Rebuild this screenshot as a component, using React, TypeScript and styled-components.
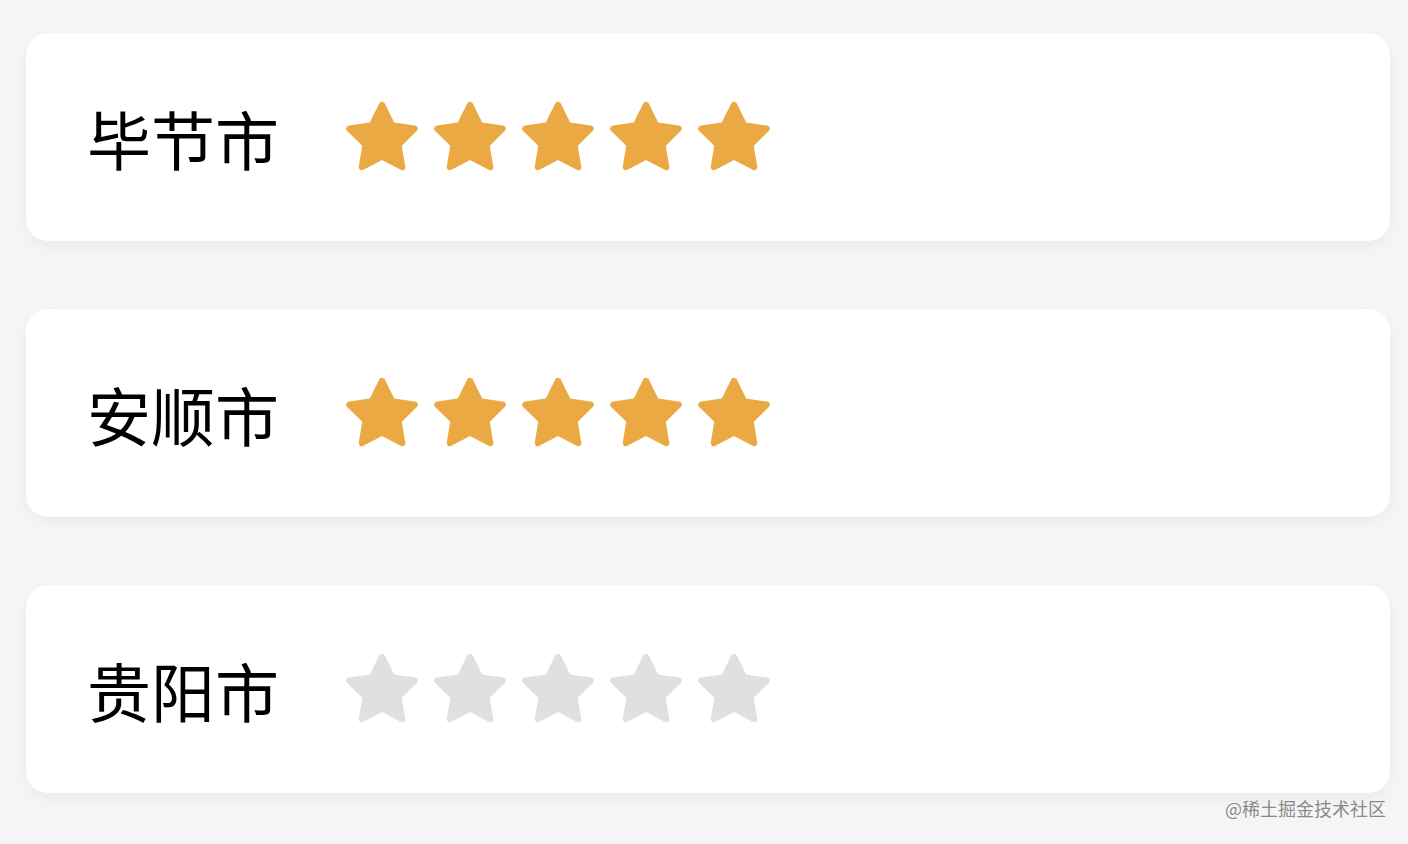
import React, { FunctionComponent } from "react";
import styled, { createGlobalStyle } from "styled-components";

const cities = [
  { name: "毕节市", score: 5 },
  { name: "安顺市", score: 5 },
  { name: "贵阳市", score: 0 },
];

const GlobalStyle = createGlobalStyle`
  html, body {
    margin: 0;
    padding: 0;
    background-color: #f5f5f5;
  }
  body {
    font-family: "Noto Sans CJK SC", "Noto Sans", sans-serif;
  }
`;

interface StarProps {
  on: boolean;
}

const Star: FunctionComponent<StarProps> = ({ on }) => {
  const color = on ? "#eba944" : "#e0e0e0";
  return (
    <StarIcon viewBox="0 0 24 24">
      <path
        d="M12 2.2l3.09 6.26L22 9.47l-5 4.87 1.18 6.88L12 17.97l-6.18 3.25L7 14.34 2 9.47l6.91-1.01L12 2.2z"
        fill={color}
        stroke={color}
        strokeWidth={2}
        strokeLinejoin="round"
      />
    </StarIcon>
  );
};

const App: FunctionComponent = () => {
  return (
    <Page>
      <GlobalStyle />
      {cities.map((city) => (
        <Card key={city.name}>
          <Label>{city.name}</Label>
          <Stars>
            {[1, 2, 3, 4, 5].map((i) => (
              <Star key={i} on={i <= city.score} />
            ))}
          </Stars>
        </Card>
      ))}
      <Footer>@稀土掘金技术社区</Footer>
    </Page>
  );
};

export default App;

const Page = styled.div`
  display: flex;
  flex-direction: column;
  gap: 68px;
  width: 1408px;
  height: 844px;
  box-sizing: border-box;
  padding: 33px 18px 0 26px;
  overflow: hidden;
`;

const Card = styled.div`
  display: flex;
  align-items: center;
  height: 208px;
  padding-left: 61px;
  border-radius: 22px;
  background-color: #ffffff;
  box-shadow: 0 6px 14px rgba(0, 0, 0, 0.04);
  flex-shrink: 0;
`;

const Label = styled.span`
  width: 256px;
  font-size: 64px;
  line-height: 1;
  color: #000000;
`;

const Stars = styled.div`
  display: flex;
  gap: 10px;
`;

const StarIcon = styled.svg`
  width: 78px;
  height: 80px;
  display: block;
`;

const Footer = styled.div`
  margin-top: -66px;
  padding-right: 4px;
  text-align: right;
  font-size: 18px;
  color: #8a8a8a;
`;
